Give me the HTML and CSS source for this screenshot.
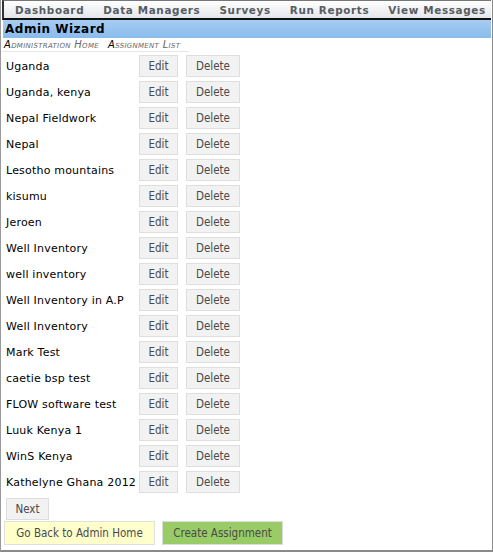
FILE: index.html
```html
<!DOCTYPE html>
<html>
<head>
<meta charset="utf-8">
<link rel="stylesheet" href="styles.css">
</head>
<body>
<div class="frame">
  <nav class="nav">
    <span class="nav-item">Dashboard</span>
    <span class="nav-item">Data Managers</span>
    <span class="nav-item">Surveys</span>
    <span class="nav-item">Run Reports</span>
    <span class="nav-item">View Messages</span>
  </nav>
  <div class="title">Admin Wizard</div>
  <div class="crumbs"><span class="crumb">Administration Home</span><span class="crumb">Assignment List</span></div>
  <div class="list">
    <div class="row"><span class="label">Uganda</span><span class="btn edit">Edit</span><span class="btn del">Delete</span></div>
    <div class="row"><span class="label">Uganda, kenya</span><span class="btn edit">Edit</span><span class="btn del">Delete</span></div>
    <div class="row"><span class="label">Nepal Fieldwork</span><span class="btn edit">Edit</span><span class="btn del">Delete</span></div>
    <div class="row"><span class="label">Nepal</span><span class="btn edit">Edit</span><span class="btn del">Delete</span></div>
    <div class="row"><span class="label">Lesotho mountains</span><span class="btn edit">Edit</span><span class="btn del">Delete</span></div>
    <div class="row"><span class="label">kisumu</span><span class="btn edit">Edit</span><span class="btn del">Delete</span></div>
    <div class="row"><span class="label">Jeroen</span><span class="btn edit">Edit</span><span class="btn del">Delete</span></div>
    <div class="row"><span class="label">Well Inventory</span><span class="btn edit">Edit</span><span class="btn del">Delete</span></div>
    <div class="row"><span class="label">well inventory</span><span class="btn edit">Edit</span><span class="btn del">Delete</span></div>
    <div class="row"><span class="label">Well Inventory in A.P</span><span class="btn edit">Edit</span><span class="btn del">Delete</span></div>
    <div class="row"><span class="label">Well Inventory</span><span class="btn edit">Edit</span><span class="btn del">Delete</span></div>
    <div class="row"><span class="label">Mark Test</span><span class="btn edit">Edit</span><span class="btn del">Delete</span></div>
    <div class="row"><span class="label">caetie bsp test</span><span class="btn edit">Edit</span><span class="btn del">Delete</span></div>
    <div class="row"><span class="label">FLOW software test</span><span class="btn edit">Edit</span><span class="btn del">Delete</span></div>
    <div class="row"><span class="label">Luuk Kenya 1</span><span class="btn edit">Edit</span><span class="btn del">Delete</span></div>
    <div class="row"><span class="label">WinS Kenya</span><span class="btn edit">Edit</span><span class="btn del">Delete</span></div>
    <div class="row"><span class="label">Kathelyne Ghana 2012</span><span class="btn edit">Edit</span><span class="btn del">Delete</span></div>
  </div>
  <div class="next-row"><span class="btn next">Next</span></div>
  <div class="actions">
    <span class="btn back">Go Back to Admin Home</span>
    <span class="btn create">Create Assignment</span>
  </div>
</div>
</body>
</html>
```
FILE: styles.css
```css
html, body {
  margin: 0;
  padding: 0;
  background: #fff;
}
.frame {
  box-sizing: border-box;
  width: 493px;
  height: 552px;
  border-left: 1px solid #9a9a9a;
  border-right: 1px solid #8a8a8a;
  border-bottom: 2px solid #8a8a8a;
  padding-left: 1px;
}
.nav {
  display: flex;
  height: 17px;
  margin-right: 1px;
  border-top: 1px solid #777;
  border-left: 2px solid #333;
  border-bottom: 2px solid #111;
  background: linear-gradient(#ffffff, #e4e6ea);
  padding-left: 11px;
  gap: 19px;
  align-items: center;
  overflow: hidden;
}
.nav-item {
  flex-shrink: 0;
  white-space: nowrap;
  font-family: "DejaVu Sans", Verdana, sans-serif;
  font-weight: bold;
  font-size: 10.4px;
  letter-spacing: 0.65px;
  color: #575c62;
}
.title {
  height: 18px;
  margin-right: 1px;
  margin-left: 1px;
  background: linear-gradient(#a6cdf3, #88bbec);
  font-family: "DejaVu Sans", Verdana, sans-serif;
  font-weight: bold;
  font-size: 12px;
  letter-spacing: 0.5px;
  line-height: 18px;
  padding-left: 2px;
  color: #000;
}
.crumbs {
  display: flex;
  gap: 9px;
  width: 185px;
  height: 13px;
  padding-left: 2px;
  border-bottom: 1px solid #e6e6e6;
  font-family: "DejaVu Sans", Verdana, sans-serif;
  font-size: 10px;
  font-style: italic;
  font-variant: small-caps;
  letter-spacing: 0.3px;
  color: #666;
  line-height: 13px;
  white-space: nowrap;
}
.crumb::first-letter {
  color: #000;
}
.list {
  padding-top: 1px;
  padding-left: 4px;
}
.row {
  display: flex;
  align-items: center;
  height: 26px;
}
.label {
  width: 134px;
  font-family: "DejaVu Sans", Verdana, sans-serif;
  font-size: 11px;
  letter-spacing: 0.2px;
  color: #000;
}
.btn {
  box-sizing: border-box;
  display: inline-flex;
  align-items: center;
  justify-content: center;
  height: 22px;
  border: 1px solid #dedede;
  background: #f2f2f2;
  font-family: "DejaVu Sans Condensed", "DejaVu Sans", sans-serif;
  font-size: 11.5px;
  color: #4a4a4a;
}
.edit {
  width: 39px;
  margin-left: -1px;
}
.del {
  width: 54px;
  margin-left: 8px;
}
.next-row {
  padding-left: 4px;
  padding-top: 3px;
}
.next {
  width: 43px;
  height: 22px;
}
.actions {
  display: flex;
  gap: 7px;
  padding-left: 2px;
  padding-top: 1px;
}
.back {
  width: 151px;
  height: 24px;
  background: #ffffcc;
  border-color: #e0e0e0;
}
.create {
  width: 121px;
  height: 24px;
  background: #99cc66;
  border-color: #dcdcdc;
}
```
